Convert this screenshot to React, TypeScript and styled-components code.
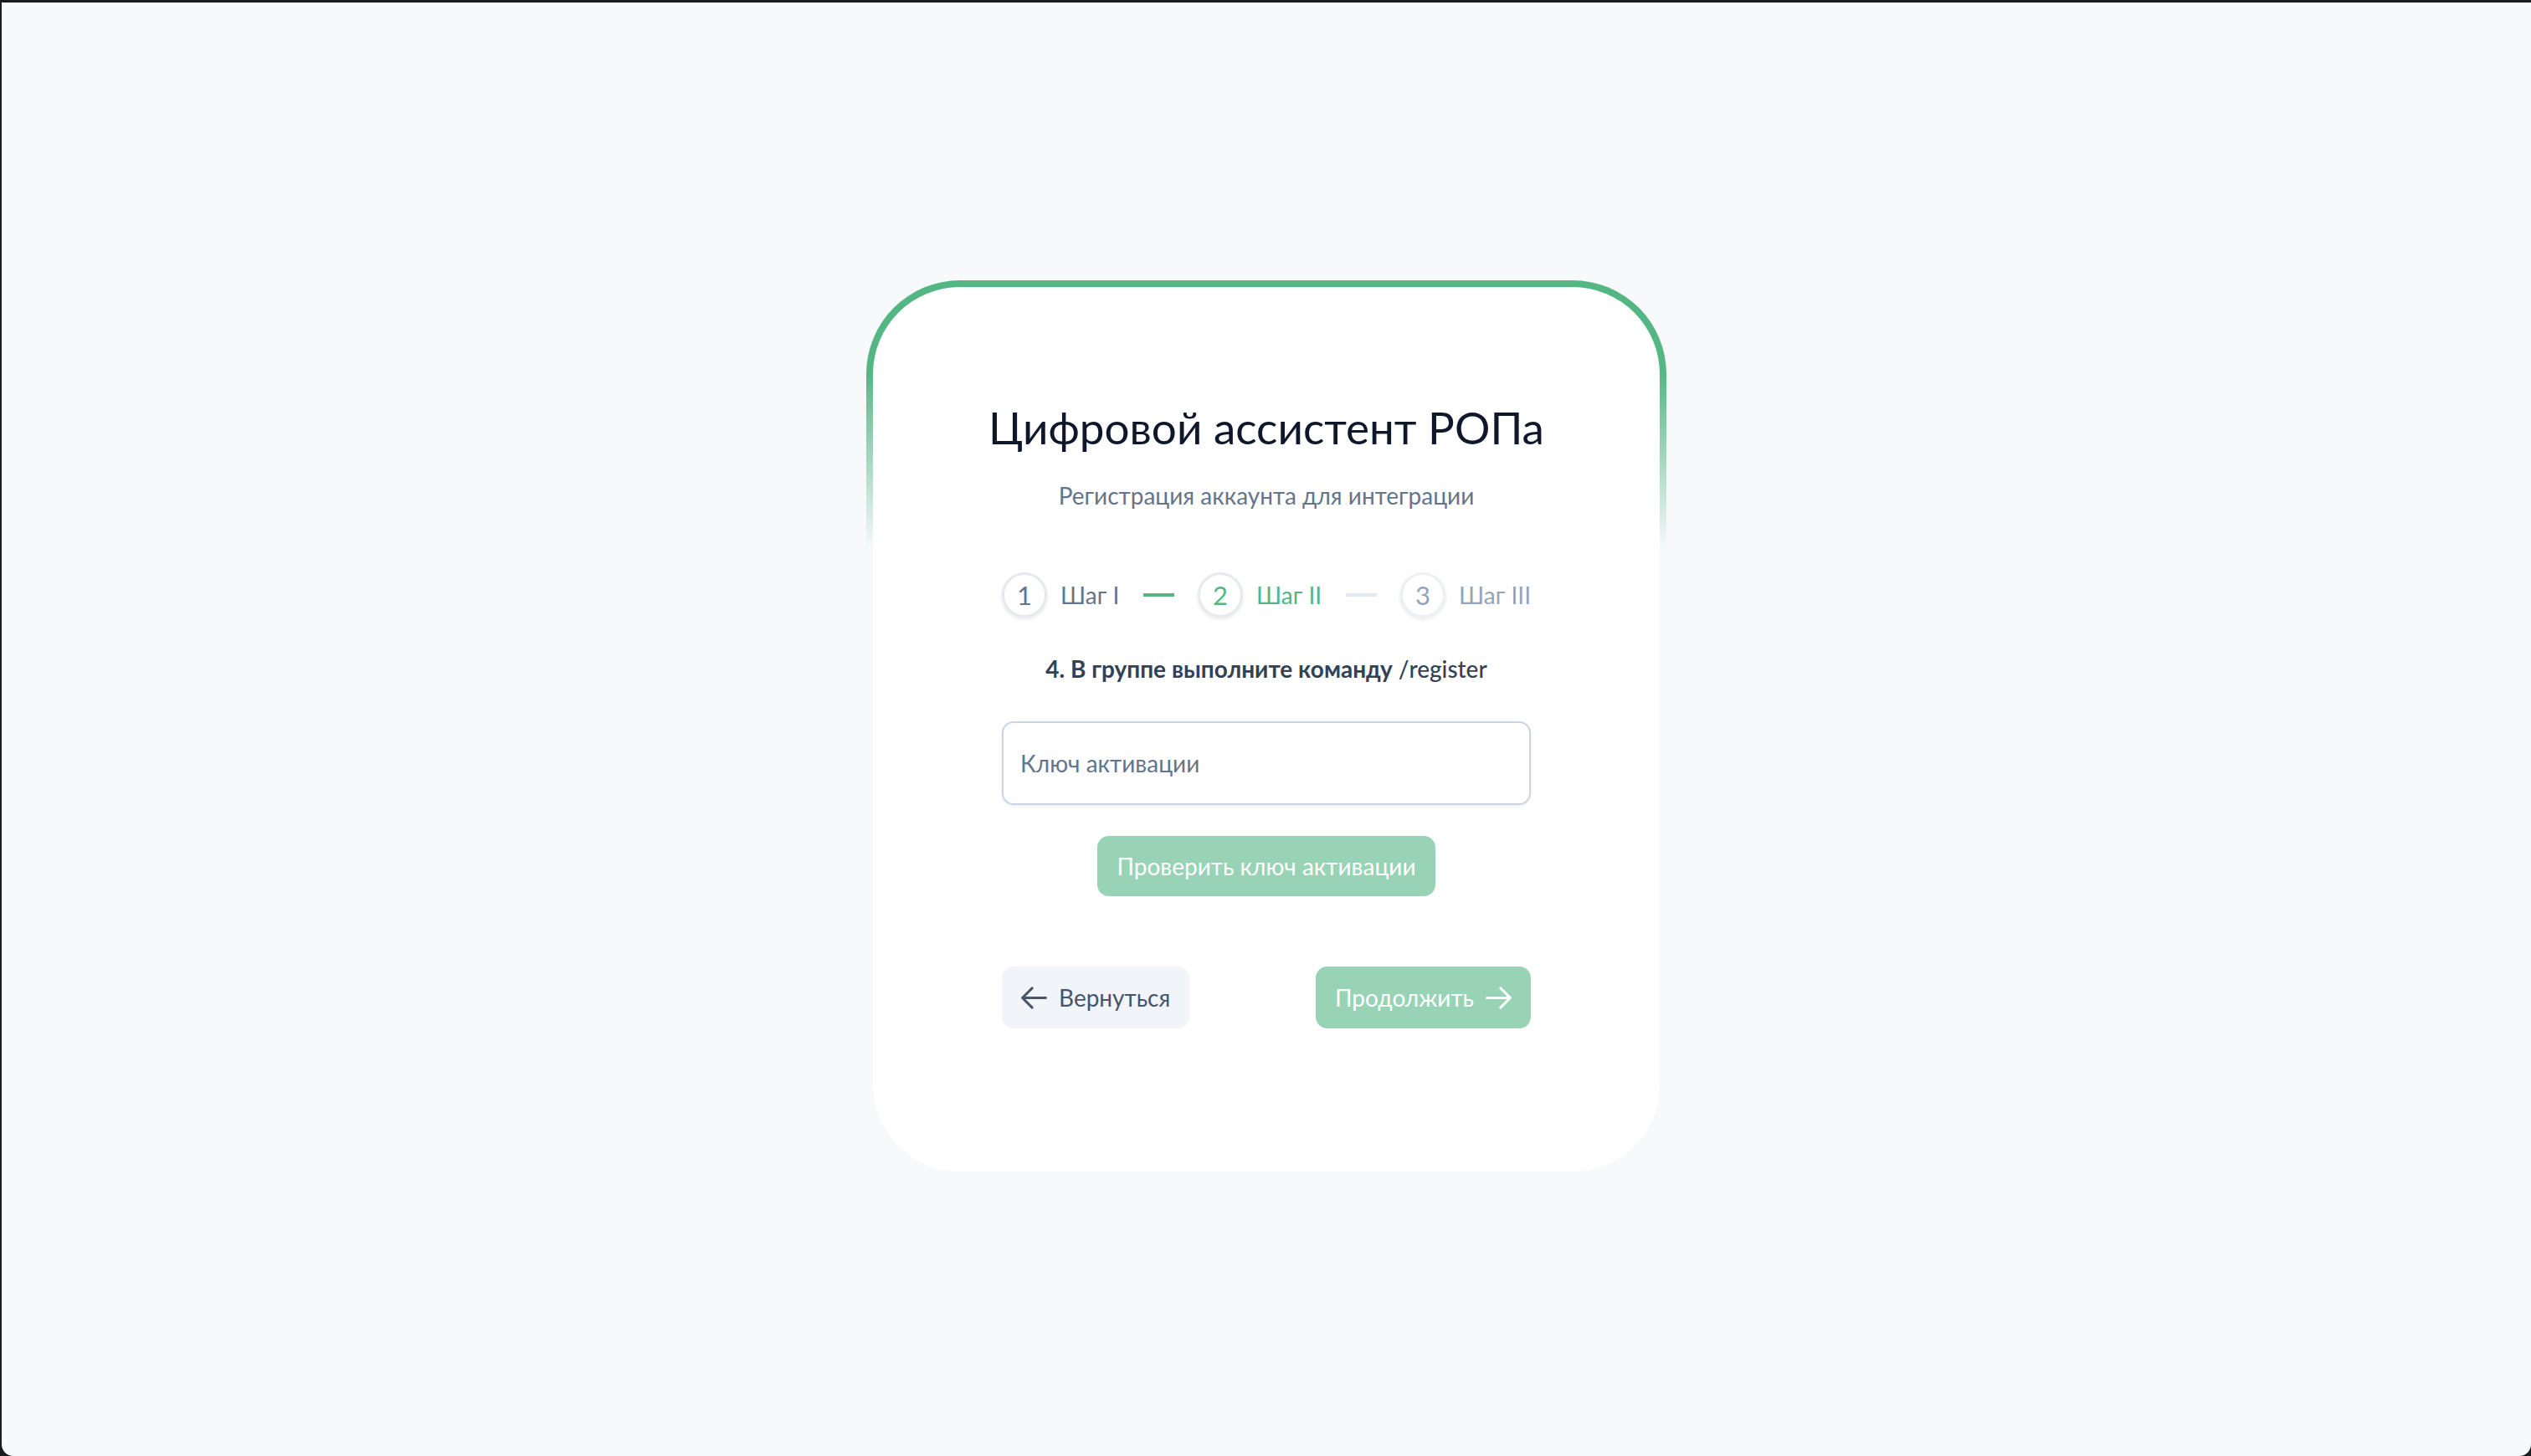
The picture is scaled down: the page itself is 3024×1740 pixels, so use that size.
import styled, { createGlobalStyle } from "styled-components";

const GlobalStyle = createGlobalStyle`
  html, body {
    margin: 0;
    padding: 0;
    background: #1c1c1e;
  }

  body {
    font-family: Lato, "Noto Sans", "Liberation Sans", sans-serif;
  }

  * {
    box-sizing: border-box;
  }
`;

const green = "#53b683";

const Page = styled.div`
  margin: 3px 0 0 2px;
  height: calc(100vh - 3px);
  background: #f8f9fb;
  border-bottom-right-radius: 14px;
  border-bottom-left-radius: 14px;
  display: flex;
  align-items: center;
  justify-content: center;
`;

const CardFrame = styled.div`
  width: 956px;
  padding: 8px;
  border-radius: 112px;
  background: linear-gradient(180deg, ${green} 10%, rgba(83, 182, 131, 0) 30%);
`;

const Card = styled.div`
  background: #ffffff;
  border-radius: 104px;
  padding: 136px 0 171px;
  display: flex;
  flex-direction: column;
  align-items: center;
`;

const Content = styled.div`
  width: 632px;
  display: flex;
  flex-direction: column;
  align-items: center;
`;

const Title = styled.h1`
  margin: 0;
  font-size: 53px;
  line-height: 1.2;
  font-weight: 400;
  color: #0f172a;
  white-space: nowrap;
`;

const Subtitle = styled.p`
  margin: 34px 0 0;
  font-size: 28px;
  line-height: 1.2;
  color: #64748b;
`;

const Steps = styled.div`
  margin-top: 74px;
  width: 100%;
  display: flex;
  align-items: center;
  justify-content: space-between;
`;

const Step = styled.div`
  display: flex;
  align-items: center;
  gap: 16px;
`;

type StepState = "done" | "active" | "todo";

const stepColor = (s: StepState) =>
  s === "active" ? green : s === "done" ? "#64748b" : "#94a3b8";

const StepCircle = styled.div<{ $state: StepState }>`
  width: 54px;
  height: 54px;
  border-radius: 50%;
  border: 3px solid ${(p) => (p.$state === "todo" ? "#eceff4" : "#e6e9ef")};
  box-shadow: 0 2px 4px rgba(15, 23, 42, 0.1);
  display: flex;
  align-items: center;
  justify-content: center;
  font-size: 31px;
  color: ${(p) => stepColor(p.$state)};
`;

const StepLabel = styled.span<{ $state: StepState }>`
  font-size: 28px;
  color: ${(p) => stepColor(p.$state)};
`;

const StepLine = styled.div<{ $done: boolean }>`
  width: 37px;
  height: 4px;
  background: ${(p) => (p.$done ? green : "#e2e8f0")};
`;

const Instruction = styled.p`
  margin: 45px 0 0;
  font-size: 28px;
  line-height: 1.2;
  font-weight: 700;
  color: #334155;
  white-space: nowrap;

  span {
    font-weight: 500;
  }
`;

const KeyInput = styled.input`
  margin-top: 46px;
  width: 100%;
  height: 100px;
  padding: 0 20px;
  border: 2px solid #cbd5e1;
  border-radius: 14px;
  box-shadow: 0 2px 4px rgba(15, 23, 42, 0.05);
  font-family: inherit;
  font-size: 28px;
  color: #0f172a;
  outline: none;

  &::placeholder {
    color: #64748b;
  }
`;

const Button = styled.button<{ $variant: "primary" | "ghost" }>`
  display: inline-flex;
  align-items: center;
  gap: 14px;
  height: 74px;
  padding: 0 23px;
  border: none;
  border-radius: 14px;
  font-family: inherit;
  font-size: 28px;
  background: ${(p) => (p.$variant === "primary" ? green : "#f1f4f9")};
  color: ${(p) => (p.$variant === "primary" ? "#ffffff" : "#475569")};
  opacity: ${(p) => (p.$variant === "primary" ? 0.6 : 1)};
  cursor: pointer;

  svg {
    flex-shrink: 0;
  }
`;

const CheckButton = styled(Button)`
  margin-top: 37px;
  height: 72px;
`;

const Nav = styled.div`
  margin-top: 84px;
  width: 100%;
  display: flex;
  justify-content: space-between;
  align-items: center;
`;

const Arrow = ({ dir }: { dir: "left" | "right" }) => (
  <svg
    width="31"
    height="31"
    viewBox="2 2 20 20"
    fill="none"
    stroke="currentColor"
    strokeWidth="1.9"
    strokeLinecap="round"
    strokeLinejoin="round"
  >
    {dir === "left" ? (
      <path d="M10.5 19.5 3 12m0 0 7.5-7.5M3 12h18" />
    ) : (
      <path d="M13.5 4.5 21 12m0 0-7.5 7.5M21 12H3" />
    )}
  </svg>
);

const steps: { n: number; label: string; state: StepState }[] = [
  { n: 1, label: "Шаг I", state: "done" },
  { n: 2, label: "Шаг II", state: "active" },
  { n: 3, label: "Шаг III", state: "todo" },
];

export default function App() {
  return (
    <>
      <GlobalStyle />
      <Page>
        <CardFrame>
          <Card>
            <Content>
              <Title>Цифровой ассистент РОПа</Title>
              <Subtitle>Регистрация аккаунта для интеграции</Subtitle>

              <Steps>
                {steps.flatMap((s, i) => {
                  const item = (
                    <Step key={s.n}>
                      <StepCircle $state={s.state}>{s.n}</StepCircle>
                      <StepLabel $state={s.state}>{s.label}</StepLabel>
                    </Step>
                  );
                  return i < steps.length - 1
                    ? [item, <StepLine key={"l" + i} $done={i === 0} />]
                    : [item];
                })}
              </Steps>

              <Instruction>
                4. В группе выполните команду <span>/register</span>
              </Instruction>

              <KeyInput placeholder="Ключ активации" />

              <CheckButton $variant="primary">Проверить ключ активации</CheckButton>

              <Nav>
                <Button $variant="ghost">
                  <Arrow dir="left" />
                  Вернуться
                </Button>
                <Button $variant="primary">
                  Продолжить
                  <Arrow dir="right" />
                </Button>
              </Nav>
            </Content>
          </Card>
        </CardFrame>
      </Page>
    </>
  );
}
